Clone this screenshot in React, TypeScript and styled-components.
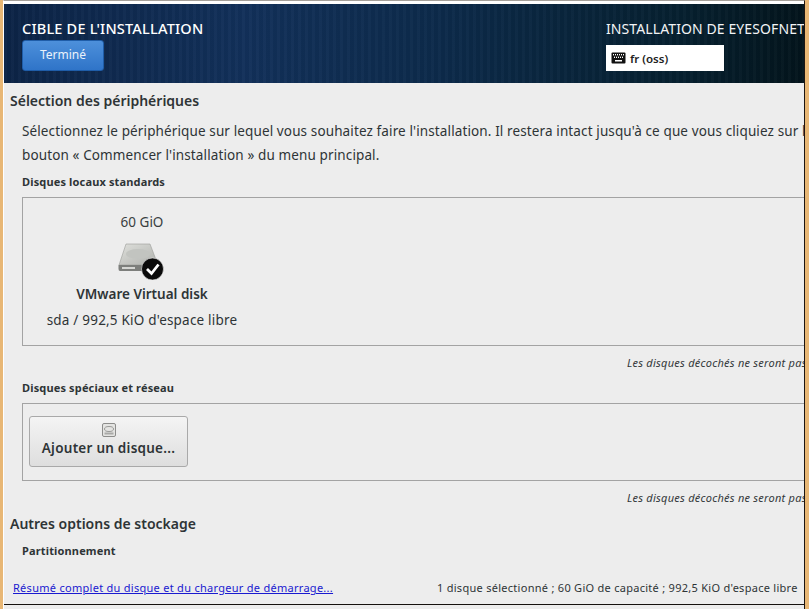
import React from "react";
import styled, { createGlobalStyle } from "styled-components";

const Global = createGlobalStyle`
  html, body { margin: 0; padding: 0; background: #e8b775; }
  body { font-family: "Noto Sans", "Open Sans", sans-serif; }
`;
const Desk = styled.div`
  width: 809px; height: 609px; overflow: hidden; box-sizing: border-box;
  padding-left: 3px; background: #e8b775; position: relative;
`;
const Win = styled.div`
  width: 802px; height: 609px; box-sizing: border-box; background: #ededed;
  border-top: 1px solid #a5a09a; padding-top: 3px; border-left: 1px solid #fff;
  border-right: 1px solid #1c1410; display: flex; flex-direction: column; overflow: hidden;
  box-shadow: inset 0 3px 0 #fff;
`;
const Header = styled.header`
  height: 79px; flex: none; box-sizing: border-box; display: flex; justify-content: space-between;
  background:
    repeating-linear-gradient(90deg, rgba(255,255,255,.018) 0 3px, rgba(0,0,0,.03) 3px 7px),
    linear-gradient(90deg, #0c2446 0%, #12305a 30%, #0c2a4a 55%, #06202f 85%, #03141c 100%);
  color: #fff; overflow: hidden;
`;
const HeadLeft = styled.div`
  padding: 14px 0 0 18px; display: flex; flex-direction: column; align-items: flex-start;
`;
const Title = styled.div`
  font-size: 14.5px; font-weight: 500; line-height: 20px; letter-spacing: .2px; white-space: nowrap;
`;
const Done = styled.button`
  margin-top: 2px; width: 82px; height: 31px; border-radius: 3px; border: 1px solid #1f5da8;
  background: linear-gradient(#4d90db, #2f74c8); color: #eaf2fb; font: 400 12px "Noto Sans", sans-serif; padding: 0 0 2px;
`;
const HeadRight = styled.div`
  width: 198px; flex: none; padding-top: 15px; overflow: hidden;
`;
const Product = styled.div`
  font-size: 14px; line-height: 20px; white-space: nowrap; letter-spacing: .1px; color: #f2f4f6;
`;
const Kbd = styled.div`
  margin-top: 6px; width: 118px; height: 26px; background: #fff; color: #222; display: flex; align-items: center;
  gap: 4px; padding-left: 5px; box-sizing: border-box; font-size: 11.5px; font-weight: 600;
`;
const Body = styled.main`
  flex: 1; display: flex; flex-direction: column; overflow: hidden; min-height: 0; color: #2e3436;
`;
const H2 = styled.h2<{ $top: number }>`
  margin: ${p => p.$top}px 0 0 6px; font-size: 14px; font-weight: 600; line-height: 20px; color: #2e3436;
`;
const Intro = styled.p`
  margin: 8px 0 0 18px; font-size: 13.5px; line-height: 24px; white-space: nowrap; letter-spacing: .12px;
`;
const H3 = styled.h3<{ $top: number }>`
  margin: ${p => p.$top}px 0 0 18px; font-size: 11px; font-weight: 700; line-height: 16px; color: #2e3436; letter-spacing: .15px;
`;
const Panel = styled.section<{ $h: number; $top: number }>`
  margin: ${p => p.$top}px 0 0 18px; width: 900px; height: ${p => p.$h}px; box-sizing: border-box;
  border: 1px solid #a3a3a3; flex: none; display: flex; align-items: flex-start;
`;
const Disk = styled.div`
  width: 238px; display: flex; flex-direction: column; align-items: center; text-align: center; padding-top: 14px;
`;
const Size = styled.div`font-size: 13.5px; line-height: 20px; color: #3a3f41;`;
const DiskIcon = styled.svg`margin-top: 10px; display: block;`;
const DiskName = styled.div`font-size: 13.5px; font-weight: 600; line-height: 20px; margin-top: 4px; white-space: nowrap;`;
const DiskInfo = styled.div`font-size: 13.5px; line-height: 20px; margin-top: 6px; white-space: nowrap; letter-spacing: .2px;`;
const Note = styled.div<{ $top: number }>`
  margin-top: ${p => p.$top}px; height: 16px; flex: none; position: relative; overflow: hidden;
  font-size: 11px; font-style: italic; line-height: 16px; white-space: nowrap; padding-left: 623px; letter-spacing: .25px; color: #33383a;
`;
const AddBtn = styled.button`
  margin: 12px 0 0 6px; width: 159px; height: 51px; border: 1px solid #a9a9a9; border-radius: 3px;
  background: linear-gradient(#f4f4f4, #dedede); display: flex; flex-direction: column; align-items: center; padding: 6px 0 0;
  font: 600 13.5px "Noto Sans", sans-serif; color: #2e3436; letter-spacing: .25px;
  span { line-height: 20px; margin-top: 1px; }
`;
const Footer = styled.div`
  margin-top: 21px; display: flex; white-space: nowrap; font-size: 11px; line-height: 16px; letter-spacing: .28px; color: #2e3436; overflow: hidden;
`;
const Link = styled.a`
  margin-left: 9px; width: 424px; flex: none; color: #1a1ad0; text-decoration: underline;
`;
const Rule = styled.div`
  position: absolute; left: 4px; top: 604px; width: 800px; height: 1px; background: #16110e;
`;
const Rest = styled.div`
  position: absolute; left: 4px; top: 605px; width: 800px; height: 4px; background: #ededed;
`;

const KeyboardIcon = () => (
  <svg width="15" height="12" viewBox="0 0 15 12">
    <rect x="0.5" y="0.5" width="14" height="11" rx="1" fill="#111" />
    <g fill="#fff">
      {[2, 4, 6, 8, 10, 12].map(x => <rect key={x} x={x} y="2" width="1" height="1.4" />)}
      {[3, 5, 7, 9, 11].map(x => <rect key={x} x={x} y="4.6" width="1" height="1.4" />)}
      <rect x="4" y="8" width="7" height="1.5" />
    </g>
  </svg>
);
const HardDrive = () => (
  <DiskIcon width="50" height="38" viewBox="0 0 50 38">
    <defs>
      <linearGradient id="top" x1="0" y1="0" x2="1" y2="1">
        <stop offset="0" stopColor="#dfe0dc" /><stop offset="1" stopColor="#aeb0ac" />
      </linearGradient>
    </defs>
    <path d="M9 2 L33 2 L41 23 L2 23 Z" fill="url(#top)" stroke="#9a9c98" strokeWidth=".6" />
    <ellipse cx="21" cy="12" rx="12" ry="5" fill="#c2c4c0" />
    <path d="M1.500 23 H41 V28 Q41 29 39 29 H3 Q1.500 29 1.500 27 Z" fill="#7d7f7c" />
    <rect x="5" y="25" width="13" height="2" fill="#d5d6d3" />
    <circle cx="35.500" cy="27" r="11" fill="#0b0b0b" stroke="#f2f2f2" strokeWidth=".6" />
    <path d="M30 27 L34.500 31.500 L41.500 22.500" fill="none" stroke="#fff" strokeWidth="2.800" />
  </DiskIcon>
);
const SmallDisk = () => (
  <svg width="14" height="14" viewBox="0 0 14 14">
    <rect x="0.5" y="0.5" width="13" height="13" rx="1.500" fill="#e4e4e2" stroke="#8d8d8b" />
    <ellipse cx="7" cy="6" rx="4.500" ry="2.500" fill="none" stroke="#9a9a98" />
    <rect x="2.500" y="9.500" width="9" height="2" fill="#a9a9a7" />
  </svg>
);

export default function App() {
  return (
    <Desk>
      <Global />
      <Win>
        <Header>
          <HeadLeft>
            <Title>CIBLE DE L'INSTALLATION</Title>
            <Done>Terminé</Done>
          </HeadLeft>
          <HeadRight>
            <Product>INSTALLATION DE EYESOFNETWORK 5.3</Product>
            <Kbd><KeyboardIcon />fr (oss)</Kbd>
          </HeadRight>
        </Header>
        <Body>
          <H2 $top={8}>Sélection des périphériques</H2>
          <Intro>
            Sélectionnez le périphérique sur lequel vous souhaitez faire l'installation. Il restera intact jusqu'à ce que vous cliquiez sur le<br />
            bouton « Commencer l'installation » du menu principal.
          </Intro>
          <H3 $top={7}>Disques locaux standards</H3>
          <Panel $h={149} $top={7}>
            <Disk>
              <Size>60 GiO</Size>
              <HardDrive />
              <DiskName>VMware Virtual disk</DiskName>
              <DiskInfo>sda / 992,5 KiO d'espace libre</DiskInfo>
            </Disk>
          </Panel>
          <Note $top={9}>Les disques décochés ne seront pas touchés.</Note>
          <H3 $top={9}>Disques spéciaux et réseau</H3>
          <Panel $h={78} $top={7}>
            <AddBtn><SmallDisk /><span>Ajouter un disque...</span></AddBtn>
          </Panel>
          <Note $top={9}>Les disques décochés ne seront pas touchés.</Note>
          <H2 $top={8}>Autres options de stockage</H2>
          <H3 $top={9}>Partitionnement</H3>
          <Footer>
            <Link href="#">Résumé complet du disque et du chargeur de démarrage...</Link>
            <span>1 disque sélectionné ; 60 GiO de capacité ; 992,5 KiO d'espace libre</span>
          </Footer>
        </Body>
      </Win>
      <Rule />
      <Rest />
    </Desk>
  );
}
